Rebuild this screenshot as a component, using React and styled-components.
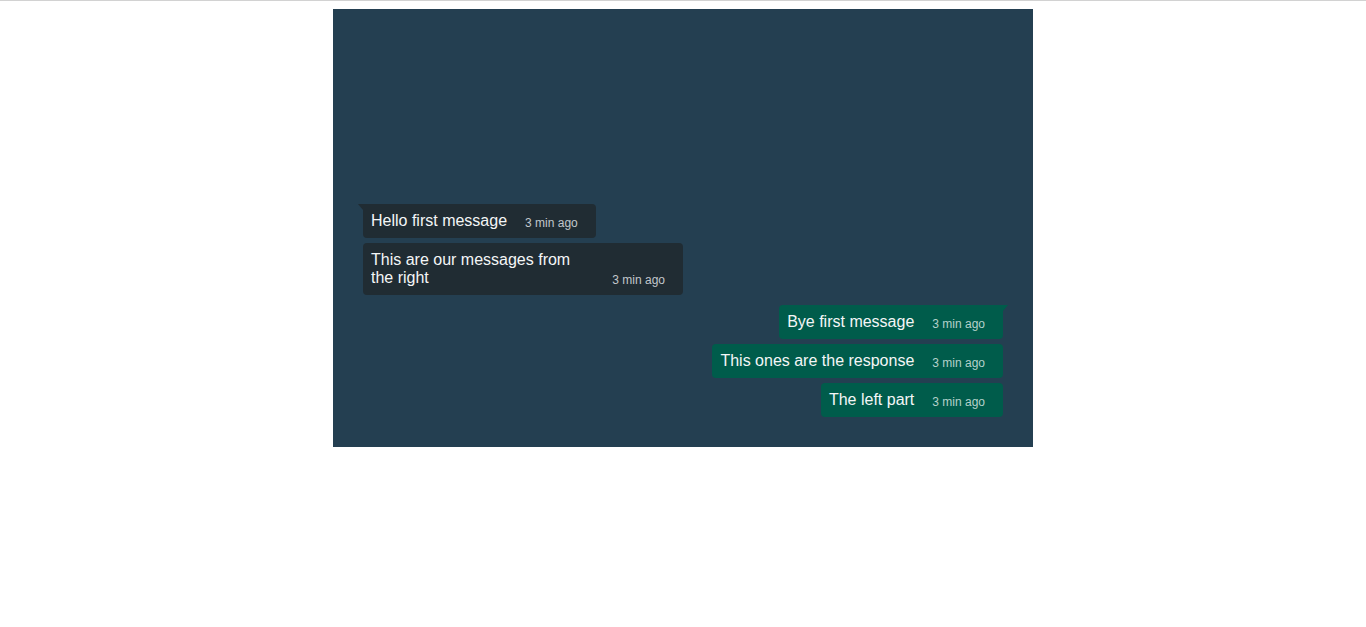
import React from 'react';
import styled, { createGlobalStyle } from 'styled-components';

const GlobalStyle = createGlobalStyle`
  html {
    border-top: 1px solid #d2d2d2;
  }
  body {
    margin: 8px;
    background: #ffffff;
    font-family: "Liberation Sans", Arial, sans-serif;
  }
`;

const ChatWindow = styled.div`
  width: 700px;
  height: 438px;
  margin: 0 auto;
  box-sizing: border-box;
  padding: 30px;
  background: #243f51;
  display: flex;
  flex-direction: column;
  justify-content: flex-end;
`;

const Group = styled.div`
  display: flex;
  flex-direction: column;
  align-items: ${props => props.$mine ? 'flex-end' : 'flex-start'};
  gap: 5px;
  & + & {
    margin-top: 10px;
  }
`;

const Bubble = styled.div`
  position: relative;
  display: flex;
  max-width: 320px;
  box-sizing: border-box;
  padding: 8px 18px 8px 8px;
  border-radius: 4px;
  background: ${props => props.$mine ? '#005c4b' : '#202c33'};
  color: #f4f6f7;
  ${props => props.$tail && (props.$mine
    ? 'border-top-right-radius: 0;'
    : 'border-top-left-radius: 0;')}

  &::before {
    content: '';
    display: ${props => props.$tail ? 'block' : 'none'};
    position: absolute;
    top: 0;
    ${props => props.$mine ? 'right: -5px;' : 'left: -5px;'}
    width: 0;
    height: 0;
    border-top: 6px solid ${props => props.$mine ? '#005c4b' : '#202c33'};
    ${props => props.$mine
      ? 'border-right: 5px solid transparent;'
      : 'border-left: 5px solid transparent;'}
  }
`;

const Text = styled.span`
  font-size: 16px;
  line-height: 18px;
`;

const Time = styled.span`
  flex-shrink: 0;
  align-self: flex-end;
  margin-left: 18px;
  font-size: 12px;
  line-height: 14px;
  color: ${props => props.$mine ? '#b3d1ca' : '#c2c7cb'};
  white-space: nowrap;
`;

const groups = [
  {
    mine: false,
    messages: ['Hello first message', 'This are our messages from the right'],
  },
  {
    mine: true,
    messages: ['Bye first message', 'This ones are the response', 'The left part'],
  },
];

const App = () => (
  <>
    <GlobalStyle />
    <ChatWindow>
      {groups.map((group, gi) => (
        <Group key={gi} $mine={group.mine}>
          {group.messages.map((msg, i) => (
            <Bubble key={i} $mine={group.mine} $tail={i === 0}>
              <Text>{msg}</Text>
              <Time $mine={group.mine}>3 min ago</Time>
            </Bubble>
          ))}
        </Group>
      ))}
    </ChatWindow>
  </>
);

export default App;
